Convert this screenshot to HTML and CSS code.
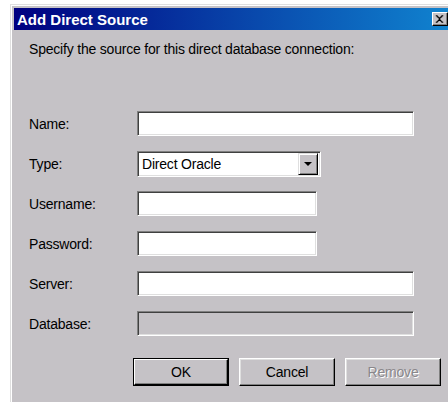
FILE: index.html
```html
<!DOCTYPE html>
<html>
<head>
<meta charset="utf-8">
<title>Add Direct Source</title>
<link rel="stylesheet" href="styles.css">
</head>
<body>
<div class="window">
  <div class="titlebar">
    <span class="title">Add Direct Source</span>
    <span class="close" aria-label="Close">
      <svg width="16" height="14" viewBox="0 0 16 14">
        <path d="M4 3h2v1h1v1h2V4h1V3h2v1h-1v1h-1v1h-1v2h1v1h1v1h1v1h-2v-1h-1V9H7v1H6v1H4v-1h1V9h1V8h1V6H6V5H5V4H4z" fill="#000"/>
      </svg>
    </span>
  </div>
  <div class="content">
    <p class="intro">Specify the source for this direct database connection:</p>
    <div class="form">
      <span class="lbl">Name:</span>
      <div class="field wide"></div>

      <span class="lbl">Type:</span>
      <div class="field combo">
        <span class="combo-text">Direct Oracle</span>
        <span class="combo-btn"><span class="arrow"></span></span>
      </div>

      <span class="lbl">Username:</span>
      <div class="field short"></div>

      <span class="lbl">Password:</span>
      <div class="field short"></div>

      <span class="lbl">Server:</span>
      <div class="field wide"></div>

      <span class="lbl">Database:</span>
      <div class="field wide disabled"></div>
    </div>
    <div class="buttons">
      <span class="btn default"><span class="btn-face">OK</span></span>
      <span class="btn"><span class="btn-face">Cancel</span></span>
      <span class="btn disabled"><span class="btn-face">Remove</span></span>
    </div>
  </div>
</div>
</body>
</html>
```

FILE: styles.css
```css
html, body {
  margin: 0;
  padding: 0;
  background: #ffffff;
  overflow: hidden;
  width: 448px;
  height: 402px;
}

/* dialog frame; continues past the right and bottom edges */
.window {
  margin: 4px 0 0 10px;
  width: 438px;
  height: 398px;
  box-sizing: border-box;
  background: #c5c2c6;
  border-top: 1px solid #dfdfdf;
  border-left: 1px solid #dfdfdf;
  box-shadow: inset 1px 1px #ffffff;
  padding: 3px 0 0 3px;
  overflow: hidden;
  font-family: "Liberation Sans", Arial, sans-serif;
  font-size: 14px;
  letter-spacing: -0.2px;
  color: #000;
}

/* caption bar */
.titlebar {
  width: 438px;
  height: 22px;
  box-sizing: border-box;
  display: flex;
  align-items: center;
  justify-content: space-between;
  padding: 0 4px 0 3px;
  background: linear-gradient(to right, #000080, #1084d0);
}

.title {
  color: #ffffff;
  font-weight: bold;
  font-size: 15px;
  letter-spacing: 0;
}

.close {
  flex: none;
  width: 16px;
  height: 14px;
  box-sizing: border-box;
  background: #c5c2c6;
  border: 1px solid;
  border-color: #ffffff #000000 #000000 #ffffff;
  box-shadow: inset -1px -1px #808080;
  display: flex;
}

.close svg {
  margin: -1px 0 0 -1px;
}

/* dialog body */
.content {
  padding: 11px 0 0 15px;
}

.intro {
  margin: 0;
  line-height: 16px;
  white-space: nowrap;
}

.form {
  margin-top: 54px;
  display: grid;
  grid-template-columns: 108px auto;
  grid-auto-rows: 25px;
  row-gap: 15px;
  align-items: center;
}

.lbl {
  line-height: 16px;
}

.field {
  height: 25px;
  box-sizing: border-box;
  background: #ffffff;
  border: 1px solid;
  border-color: #808080 #ffffff #ffffff #808080;
  box-shadow: inset 1px 1px #404040, inset -1px -1px #dfdfdf;
}

.field.wide { width: 277px; }
.field.short { width: 180px; }
.field.disabled { background: #c5c2c6; }

.field.combo {
  width: 184px;
  height: 26px;
  display: flex;
  align-items: center;
  padding: 2px;
}

.combo-text {
  flex: 1;
  padding-left: 2px;
  line-height: 16px;
}

.combo-btn {
  width: 20px;
  height: 22px;
  box-sizing: border-box;
  background: #c5c2c6;
  border: 1px solid;
  border-color: #dfdfdf #000000 #000000 #dfdfdf;
  box-shadow: inset 1px 1px #ffffff, inset -1px -1px #808080;
  display: flex;
  align-items: center;
  justify-content: center;
}

.arrow {
  width: 0;
  height: 0;
  border-left: 4px solid transparent;
  border-right: 4px solid transparent;
  border-top: 4px solid #000;
}

/* push buttons */
.buttons {
  margin: 22px 0 0 104px;
  display: flex;
  gap: 10px;
}

.btn {
  flex: none;
  width: 96px;
  height: 28px;
  box-sizing: border-box;
  background: #c5c2c6;
  border: 1px solid;
  border-color: #ffffff #000000 #000000 #ffffff;
  box-shadow: inset -1px -1px #808080, inset 1px 1px #dfdfdf;
  display: flex;
}

.btn-face {
  flex: 1;
  display: flex;
  align-items: center;
  justify-content: center;
  line-height: 16px;
}

.btn.default {
  border: 1px solid #000000;
  box-shadow: none;
}

.btn.default .btn-face {
  border: 1px solid;
  border-color: #ffffff #000000 #000000 #ffffff;
  box-shadow: inset -1px -1px #808080;
}

.btn.disabled .btn-face {
  color: #8a878b;
  text-shadow: 1px 1px #ffffff;
}
```
